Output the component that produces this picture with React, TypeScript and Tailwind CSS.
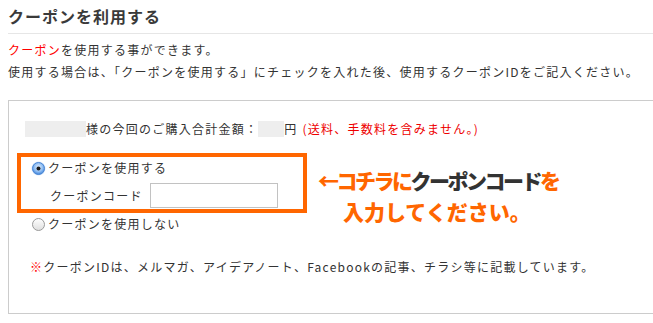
import React from 'react';

const Radio = ({ checked }: { checked: boolean }) => (
  <svg width="15" height="15" viewBox="0 0 15 15" className="shrink-0">
    <defs>
      <radialGradient id="on" cx="50%" cy="40%" r="60%">
        <stop offset="0%" stopColor="#e6f1ff" />
        <stop offset="60%" stopColor="#8fbdf2" />
        <stop offset="100%" stopColor="#3d82d9" />
      </radialGradient>
      <linearGradient id="off" x1="0" y1="0" x2="0" y2="1">
        <stop offset="0%" stopColor="#ffffff" />
        <stop offset="100%" stopColor="#dedede" />
      </linearGradient>
    </defs>
    {checked ? (
      <>
        <circle cx="7.5" cy="7.5" r="7" fill="#bcd7f6" opacity="0.6" />
        <circle cx="7.5" cy="7.5" r="6" fill="url(#on)" stroke="#4a86d4" strokeWidth="1" />
        <circle cx="7.5" cy="7.5" r="2" fill="#1b1b1b" />
      </>
    ) : (
      <circle cx="7.5" cy="7.5" r="6" fill="url(#off)" stroke="#9a9a9a" strokeWidth="1" />
    )}
  </svg>
);

export default function App() {
  return (
    <div className="w-[653px] h-[323px] overflow-hidden bg-white pl-2 text-[#333] font-['Noto_Sans_CJK_JP','Noto_Sans',sans-serif]">
      <h2 className="w-[700px] pt-[6px] pb-[7px] border-b border-[#e6e6e6] text-[16px] leading-[20px] font-bold tracking-[1px] text-[#3a3a3a]">
        クーポンを利用する
      </h2>

      <div className="mt-[5px] text-[12px] leading-[22px] tracking-[1.25px]">
        <p>
          <span className="text-[#ff0000]">クーポン</span>を使用する事ができます。
        </p>
        <p>使用する場合は、「クーポンを使用する」にチェックを入れた後、使用するクーポンIDをご記入ください。</p>
      </div>

      <div className="mt-[17px] w-[700px] border border-[#cccccc] pl-4 pt-[18px] pb-[36px] text-[12px] tracking-[1.25px]">
        {/* total */}
        <div className="flex items-center h-5 leading-5">
          <span className="inline-block w-[61px] h-4 bg-[#eeeeee]" />
          <span>様の今回のご購入合計金額：</span>
          <span className="inline-block w-[26px] h-4 bg-[#eeeeee]" />
          <span>円</span>
          <span className="ml-[5px] text-[#ee0000]">(送料、手数料を含みません。)</span>
        </div>

        {/* coupon choice + callout */}
        <div className="mt-[14px] flex items-start">
          <div className="-ml-2 w-[290px] border-4 border-[#ff6600] pt-[1px] pb-[1px]">
            <label className="flex items-center h-5 pl-[10px] gap-[2px]">
              <Radio checked />
              <span>クーポンを使用する</span>
            </label>
            <div className="mt-[5px] flex items-center pl-[29px]">
              <span>クーポンコード</span>
              <input className="ml-[7px] w-[128px] h-[25px] border border-[#c2c2c2] bg-white outline-none" />
            </div>
          </div>

          <div className="ml-[11px] mt-[12px] -mb-[30px] text-[21px] leading-[31px] font-black text-[#ff6600] tracking-[-2.5px]">
            <p>
              ←コチラに<span className="text-[#333333]">クーポンコード</span>を
            </p>
            <p className="pl-[25px] tracking-[0px]">入力してください。</p>
          </div>
        </div>

        <label className="mt-[1px] flex items-center h-5 pl-[6px] gap-[2px]">
          <Radio checked={false} />
          <span>クーポンを使用しない</span>
        </label>

        <p className="mt-[23px] pl-[5px] leading-5">
          <span className="text-[#ff0000]">※</span>クーポンIDは、メルマガ、アイデアノート、Facebookの記事、チラシ等に記載しています。
        </p>
      </div>
    </div>
  );
}
